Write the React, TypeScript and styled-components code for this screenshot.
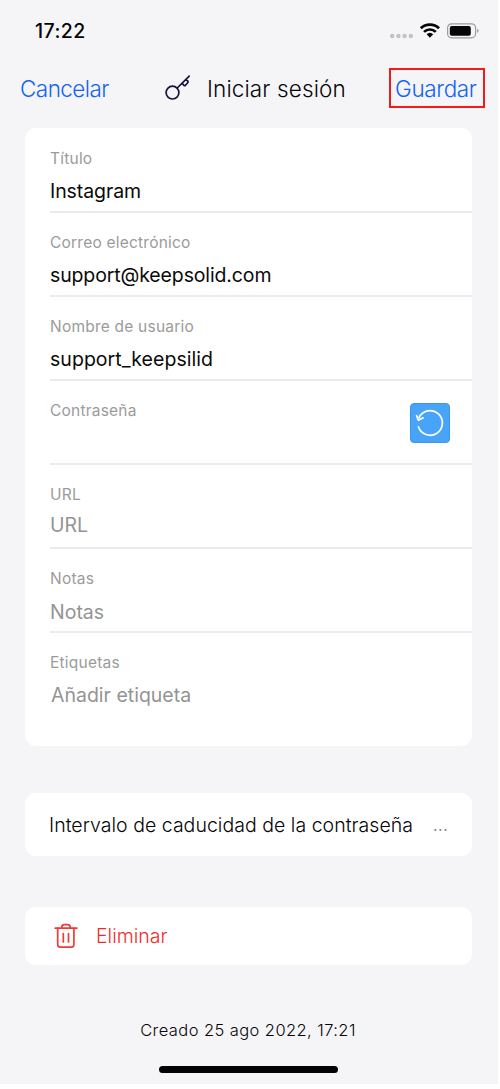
import React from "react";
import styled, { createGlobalStyle } from "styled-components";

const GlobalStyle = createGlobalStyle`
  *, *::before, *::after { box-sizing: border-box; }
  body { margin: 0; background: #fff; }
`;

const Screen = styled.div`
  width: 498px;
  height: 1084px;
  background: #f5f5f8;
  font-family: Inter, "Liberation Sans", sans-serif;
  font-weight: 300;
  color: #050507;
  display: flex;
  flex-direction: column;
  overflow: hidden;
`;

const StatusBar = styled.div`
  height: 68px;
  flex: none;
  display: flex;
  align-items: flex-start;
  justify-content: space-between;
  padding: 19px 19px 0 35px;
`;

const Clock = styled.span`
  font-size: 19.5px;
  line-height: 24px;
  font-weight: 500;
  letter-spacing: 0.45px;
`;

const StatusIcons = styled.svg`
  display: block;
  margin-top: 2px;
`;

const NavBar = styled.header`
  height: 60px;
  flex: none;
  display: grid;
  grid-template-columns: 145px 1fr 96px;
  align-items: start;
  padding: 0 13px 0 20px;
`;

const NavButton = styled.button<{ $framed?: boolean }>`
  appearance: none;
  background: none;
  border: ${(p) => (p.$framed ? "2px solid #f5191c" : "0")};
  height: ${(p) => (p.$framed ? 40 : 42)}px;
  padding: ${(p) => (p.$framed ? "2px 0 0 4px" : "0")};
  text-align: left;
  font-family: inherit;
  font-size: 22.5px;
  font-weight: 300;
  line-height: ${(p) => (p.$framed ? 34 : 42)}px;
  letter-spacing: ${(p) => (p.$framed ? "-0.35px" : "-0.55px")};
  color: #1263f8;
  white-space: nowrap;
`;

const NavTitle = styled.h1`
  margin: 0;
  display: flex;
  align-items: flex-start;
  gap: 15px;
  font-size: 22.5px;
  line-height: 41px;
  font-weight: 300;
  letter-spacing: 0.13px;
  white-space: nowrap;

  svg {
    margin-top: 6px;
    flex: none;
  }
`;

const Card = styled.section<{ $height: number; $gap?: number }>`
  width: 447px;
  height: ${(p) => p.$height}px;
  flex: none;
  margin: ${(p) => p.$gap ?? 0}px 0 0 25px;
  background: #fff;
  border-radius: 11px;
  display: flex;
`;

const Form = styled(Card)`
  flex-direction: column;
  padding: 1px 0 0 25px;
  font-weight: 400;
`;

const FieldRow = styled.div`
  height: 84px;
  flex: none;
  display: flex;
  justify-content: space-between;
  border-bottom: 2px solid #ebebec;

  &:last-child {
    border-bottom: 0;
  }
`;

const FieldText = styled.div`
  display: flex;
  flex-direction: column;
  padding-top: 20px;
`;

const Label = styled.span`
  font-size: 15.5px;
  line-height: 20px;
  letter-spacing: 0.22px;
  color: #9b9b9b;
`;

const Value = styled.span<{ $empty?: boolean; $top: number; $indent?: number; $spacing?: number }>`
  margin: ${(p) => p.$top}px 0 0 ${(p) => p.$indent ?? 0}px;
  font-size: 19.5px;
  line-height: 24px;
  letter-spacing: ${(p) => p.$spacing ?? 0}px;
  color: ${(p) => (p.$empty ? "#949494" : "#0a0a0a")};
`;

const GenerateButton = styled.button`
  appearance: none;
  border: 1px solid #3d97e8;
  background: #48a4f8;
  border-radius: 4px;
  width: 40px;
  height: 40px;
  margin: 22px 22px 0 0;
  padding: 0;

  svg {
    display: block;
  }
`;

const ExpiryCard = styled(Card)`
  align-items: center;
  justify-content: space-between;
  padding: 0 24px;
  font-size: 19.5px;
  letter-spacing: 0.03px;
  white-space: nowrap;
`;

const Ellipsis = styled.span`
  color: #77777a;
  font-size: 18px;
`;

const DeleteCard = styled(Card)`
  align-items: center;
  padding-left: 29px;
  gap: 18px;
  font-size: 19.5px;
  color: #f02c28;
`;

const Footer = styled.footer`
  margin-top: 53px;
  height: 24px;
  text-align: center;
  font-size: 16.5px;
  line-height: 24px;
  letter-spacing: 0.42px;
  flex: none;
  padding-right: 2px;
`;

const HomeIndicator = styled.div`
  width: 179px;
  height: 7px;
  flex: none;
  margin: 24px 0 0 159px;
  border-radius: 4px;
  background: #030303;
`;

const KeyIcon = () => (
  <svg width="27" height="27" viewBox="0 0 27 27" fill="none" stroke="#17123a" strokeWidth="1.7" strokeLinecap="round" strokeLinejoin="round">
    <circle cx="7.5" cy="18.6" r="6.4" />
    <path d="M12.2 14 24.2 2.2M21 5.6l1.8 1.4q.7.9-.1 1.8l-2.2 2.5q-.8.7-1.6 0L17.2 9.4" />
  </svg>
);

const ResetIcon = () => (
  <svg width="38" height="38" viewBox="0 0 38 38" fill="none" stroke="#fff" strokeWidth="1.7" strokeLinecap="round" strokeLinejoin="round">
    <path d="M7.4 22.8A12.3 12.3 0 1 0 8 13.6" />
    <path d="M5.6 11.6 7.4 16.2 12.2 13.8" />
  </svg>
);

const TrashIcon = () => (
  <svg width="24" height="26" viewBox="0 0 24 26" fill="none" stroke="#f03a35" strokeWidth="1.7" strokeLinecap="round" strokeLinejoin="round">
    <path d="M1.2 5.2h21.6M7.7 5V4.1Q8 1.6 10.4 1.6h3.2Q16 1.6 16.3 4.1V5" />
    <path d="M3.7 5.4v16.2q0 2.5 2.5 2.5h11.2q2.5 0 2.5-2.5V5.4M9.3 10.5v8.4M14.5 10.5v8.4" />
  </svg>
);

const fields = [
  { label: "Título", value: "Instagram", top: 10, spacing: -0.08 },
  { label: "Correo electrónico", value: "support@keepsolid.com", top: 10, spacing: -0.13 },
  { label: "Nombre de usuario", value: "support_keepsilid", top: 10, spacing: 0.04 },
  { label: "Contraseña", value: "", top: 10, generate: true },
  { label: "URL", value: "URL", top: 8, empty: true },
  { label: "Notas", value: "Notas", top: 11, empty: true },
  { label: "Etiquetas", value: "Añadir etiqueta", top: 10, empty: true, indent: 1 },
];

export default function App() {
  return (
    <>
      <GlobalStyle />
      <Screen>
        <StatusBar>
          <Clock>17:22</Clock>
          <StatusIcons width="90" height="20" viewBox="0 0 90 20">
            <g fill="#c3c3c6">
              <circle cx="3.2" cy="15" r="2.2" />
              <circle cx="9.4" cy="15" r="2.2" />
              <circle cx="15.6" cy="15" r="2.2" />
              <circle cx="21.8" cy="15" r="2.2" />
            </g>
            <g fill="none" stroke="#050505" strokeWidth="2.7">
              <path d="M31.8 7.3a13 13 0 0 1 18.2 0" />
              <path d="M35 10.9a8.4 8.4 0 0 1 11.8 0" />
            </g>
            <path d="M37.6 13.3a4.8 4.8 0 0 1 6.6 0L40.9 16.7z" fill="#050505" />
            <rect x="58.6" y="2.8" width="28" height="14" rx="4" fill="none" stroke="#9b9b9e" strokeWidth="1.2" />
            <rect x="60.8" y="5" width="21" height="9.7" rx="2" fill="#050505" />
            <path d="M88.2 7.8q1.4.6 1.4 2t-1.4 2z" fill="#9b9b9e" />
          </StatusIcons>
        </StatusBar>
        <NavBar>
          <NavButton>Cancelar</NavButton>
          <NavTitle>
            <KeyIcon />
            Iniciar sesión
          </NavTitle>
          <NavButton $framed>Guardar</NavButton>
        </NavBar>
        <Form $height={618}>
          {fields.map((f) => (
            <FieldRow key={f.label}>
              <FieldText>
                <Label>{f.label}</Label>
                <Value $top={f.top} $empty={f.empty} $indent={f.indent} $spacing={f.spacing}>
                  {f.value}
                </Value>
              </FieldText>
              {f.generate && (
                <GenerateButton aria-label="Generar contraseña">
                  <ResetIcon />
                </GenerateButton>
              )}
            </FieldRow>
          ))}
        </Form>
        <ExpiryCard $height={63} $gap={47}>
          <span>Intervalo de caducidad de la contraseña</span>
          <Ellipsis>...</Ellipsis>
        </ExpiryCard>
        <DeleteCard $height={58} $gap={51}>
          <TrashIcon />
          <span>Eliminar</span>
        </DeleteCard>
        <Footer>Creado 25 ago 2022, 17:21</Footer>
        <HomeIndicator />
      </Screen>
    </>
  );
}
